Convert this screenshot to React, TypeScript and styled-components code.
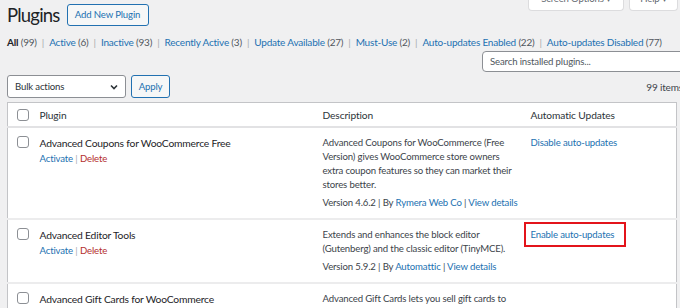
import React from 'react';
import styled, { createGlobalStyle, css } from 'styled-components';

const small = css`
  font-size: 9.6px;
  letter-spacing: -0.15px;
`;

const GlobalStyle = createGlobalStyle`
  html, body {
    margin: 0;
    padding: 0;
    background: #f0f0f1;
    overflow: hidden;
  }
  body {
    font-family: Lato, "Noto Sans", sans-serif;
    color: #3c434a;
    ${small}
  }
`;

const Page = styled.div`
  width: 680px;
  height: 308px;
  overflow: hidden;
  padding-left: 7px;
  box-sizing: border-box;
`;

const HeaderRow = styled.div`
  display: flex;
  align-items: center;
  height: 30px;
`;

const Title = styled.h1`
  margin: 0;
  font-size: 18.5px;
  letter-spacing: -0.8px;
  font-weight: 400;
  color: #1d2327;
  line-height: 30px;
`;

const OutlineButton = styled.button`
  font-family: inherit;
  ${small}
  color: #2271b1;
  background: #f6f7f7;
  border: 1px solid #2271b1;
  border-radius: 3px;
  height: ${({ $h }) => $h || 22}px;
  width: ${({ $w }) => $w}px;
  padding: 0;
  margin-left: ${({ $ml }) => $ml ?? 0}px;
  cursor: pointer;
  line-height: 1;
`;

const MetaLinks = styled.div`
  margin-left: auto;
  align-self: flex-start;
  display: flex;
  gap: 5px;
  margin-right: 2px;
`;

const MetaTab = styled.div`
  height: 22px;
  margin-top: -11px;
  width: ${({ $w }) => $w}px;
  background: #fff;
  border: 1px solid #dcdcde;
  border-top: none;
  border-radius: 0 0 4px 4px;
  color: #646970;
  display: flex;
  align-items: flex-end;
  justify-content: center;
  padding-bottom: 6px;
  box-sizing: border-box;
  line-height: 1;
`;

const Filters = styled.ul`
  list-style: none;
  margin: 5px 0 0;
  padding: 0;
  display: flex;
  height: 14px;
  align-items: center;
  white-space: nowrap;
  font-size: 10px;
  letter-spacing: -0.2px;
`;

const FilterItem = styled.li`
  color: #50575e;
  &:not(:last-child)::after {
    content: "|";
    color: #a7aaad;
    margin: 0 5px;
  }
`;

const FilterLink = styled.a`
  color: ${({ $current }) => ($current ? '#1d2327' : '#2271b1')};
  font-weight: ${({ $current }) => ($current ? 700 : 400)};
  text-decoration: none;
`;

const SearchRow = styled.div`
  display: flex;
  justify-content: flex-end;
  margin-top: 2px;
  margin-right: -14px;
`;

const SearchInput = styled.input`
  width: 212px;
  height: 21px;
  box-sizing: border-box;
  border: 1px solid #8c8f94;
  border-radius: 4px;
  background: #fff;
  font-family: inherit;
  ${small}
  padding: 0 7px;
  color: #2c3338;
  &::placeholder {
    color: #50575e;
  }
`;

const TableNav = styled.div`
  display: flex;
  align-items: center;
  margin-top: 3px;
  height: 23px;
`;

const Select = styled.div`
  width: 119px;
  height: 23px;
  box-sizing: border-box;
  border: 1px solid #8c8f94;
  border-radius: 3px;
  background: #fff;
  display: flex;
  align-items: center;
  justify-content: space-between;
  padding: 0 6px 0 7px;
  color: #2c3338;
`;

const ItemCount = styled.span`
  margin-left: auto;
  margin-right: -3px;
  color: #3c434a;
  font-size: 10px;
`;

const Table = styled.table`
  margin-top: 4px;
  width: 670px;
  border-collapse: collapse;
  background: #fff;
  border: 1px solid #c3c4c7;
  table-layout: fixed;
`;

const HeadCell = styled.th`
  text-align: left;
  font-weight: 400;
  color: #2c3338;
  height: 23px;
  padding: 0 0 0 7px;
  border-bottom: 2px solid #e2e2e4;
  vertical-align: middle;
  white-space: nowrap;
  font-size: 10.2px;
  letter-spacing: -0.1px;
`;

const CheckHead = styled.th`
  padding: 0 0 0 9px;
  height: 23px;
  border-bottom: 2px solid #e2e2e4;
  vertical-align: middle;
`;

const CheckCell = styled.td`
  padding: 8px 0 0 9px;
  vertical-align: top;
`;

const Row = styled.tr`
  & + & > td {
    border-top: 2px solid #ececed;
  }
`;

const Cell = styled.td`
  padding: 8px 0 8px 7px;
  vertical-align: top;
  line-height: 14px;
  color: #3c434a;
  white-space: nowrap;
`;

const Box = styled.span`
  display: block;
  width: 12px;
  height: 12px;
  border: 1px solid #8c8f94;
  border-radius: 3px;
  background: #fff;
  box-sizing: border-box;
`;

const PluginName = styled.div`
  color: #1d2327;
  font-size: 10.3px;
  letter-spacing: -0.2px;
`;

const Actions = styled.div`
  margin-top: 2px;
  color: #a7aaad;
`;

const Link = styled.a`
  color: ${({ $danger }) => ($danger ? '#b32d2e' : '#2271b1')};
  text-decoration: none;
`;

const Meta = styled.div`
  margin-top: 4px;
  color: #3c434a;
`;

const Highlight = styled.span`
  display: inline-block;
  margin: -6px 0 0 -7px;
  padding: 4px 10px 4px 5px;
  border: 2px solid #e3141b;
  line-height: 13px;
`;

const Chevron = () => (
  <svg width="10" height="10" viewBox="0 0 10 10">
    <path d="M2 3.5 L5 6.5 L8 3.5" fill="none" stroke="#2c3338" strokeWidth="1.6" />
  </svg>
);

const filters = [
  { label: 'All', count: 99, current: true },
  { label: 'Active', count: 6 },
  { label: 'Inactive', count: 93 },
  { label: 'Recently Active', count: 3 },
  { label: 'Update Available', count: 27 },
  { label: 'Must-Use', count: 2 },
  { label: 'Auto-updates Enabled', count: 22 },
  { label: 'Auto-updates Disabled', count: 77 },
];

export default function App() {
  return (
    <Page>
      <GlobalStyle />
      <HeaderRow>
        <Title>Plugins</Title>
        <OutlineButton $ml={7} $w={82}>Add New Plugin</OutlineButton>
        <MetaLinks>
          <MetaTab $w={96}>Screen Options ▾</MetaTab>
          <MetaTab $w={49}>Help ▾</MetaTab>
        </MetaLinks>
      </HeaderRow>

      <Filters>
        {filters.map((f) => (
          <FilterItem key={f.label}>
            <FilterLink $current={f.current}>{f.label}</FilterLink> ({f.count})
          </FilterItem>
        ))}
      </Filters>

      <SearchRow>
        <SearchInput placeholder="Search installed plugins..." />
      </SearchRow>

      <TableNav>
        <Select>
          <span>Bulk actions</span>
          <Chevron />
        </Select>
        <OutlineButton $ml={5} $w={39} $h={23}>Apply</OutlineButton>
        <ItemCount>99 items</ItemCount>
      </TableNav>

      <Table>
        <colgroup>
          <col style={{ width: 25 }} />
          <col style={{ width: 283 }} />
          <col style={{ width: 208 }} />
          <col />
        </colgroup>
        <thead>
          <tr>
            <CheckHead><Box /></CheckHead>
            <HeadCell>Plugin</HeadCell>
            <HeadCell>Description</HeadCell>
            <HeadCell>Automatic Updates</HeadCell>
          </tr>
        </thead>
        <tbody>
          <Row>
            <CheckCell><Box /></CheckCell>
            <Cell>
              <PluginName>Advanced Coupons for WooCommerce Free</PluginName>
              <Actions>
                <Link>Activate</Link> | <Link $danger>Delete</Link>
              </Actions>
            </Cell>
            <Cell>
              <div>
                Advanced Coupons for WooCommerce (Free<br />
                Version) gives WooCommerce store owners<br />
                extra coupon features so they can market their<br />
                stores better.
              </div>
              <Meta>
                Version 4.6.2 | By <Link>Rymera Web Co</Link> | <Link>View details</Link>
              </Meta>
            </Cell>
            <Cell>
              <Link>Disable auto-updates</Link>
            </Cell>
          </Row>
          <Row>
            <CheckCell><Box /></CheckCell>
            <Cell>
              <PluginName>Advanced Editor Tools</PluginName>
              <Actions>
                <Link>Activate</Link> | <Link $danger>Delete</Link>
              </Actions>
            </Cell>
            <Cell>
              <div>
                Extends and enhances the block editor<br />
                (Gutenberg) and the classic editor (TinyMCE).
              </div>
              <Meta>
                Version 5.9.2 | By <Link>Automattic</Link> | <Link>View details</Link>
              </Meta>
            </Cell>
            <Cell>
              <Highlight>
                <Link>Enable auto-updates</Link>
              </Highlight>
            </Cell>
          </Row>
          <Row>
            <CheckCell><Box /></CheckCell>
            <Cell>
              <PluginName>Advanced Gift Cards for WooCommerce</PluginName>
            </Cell>
            <Cell>
              <div>Advanced Gift Cards lets you sell gift cards to</div>
            </Cell>
            <Cell />
          </Row>
        </tbody>
      </Table>
    </Page>
  );
}
